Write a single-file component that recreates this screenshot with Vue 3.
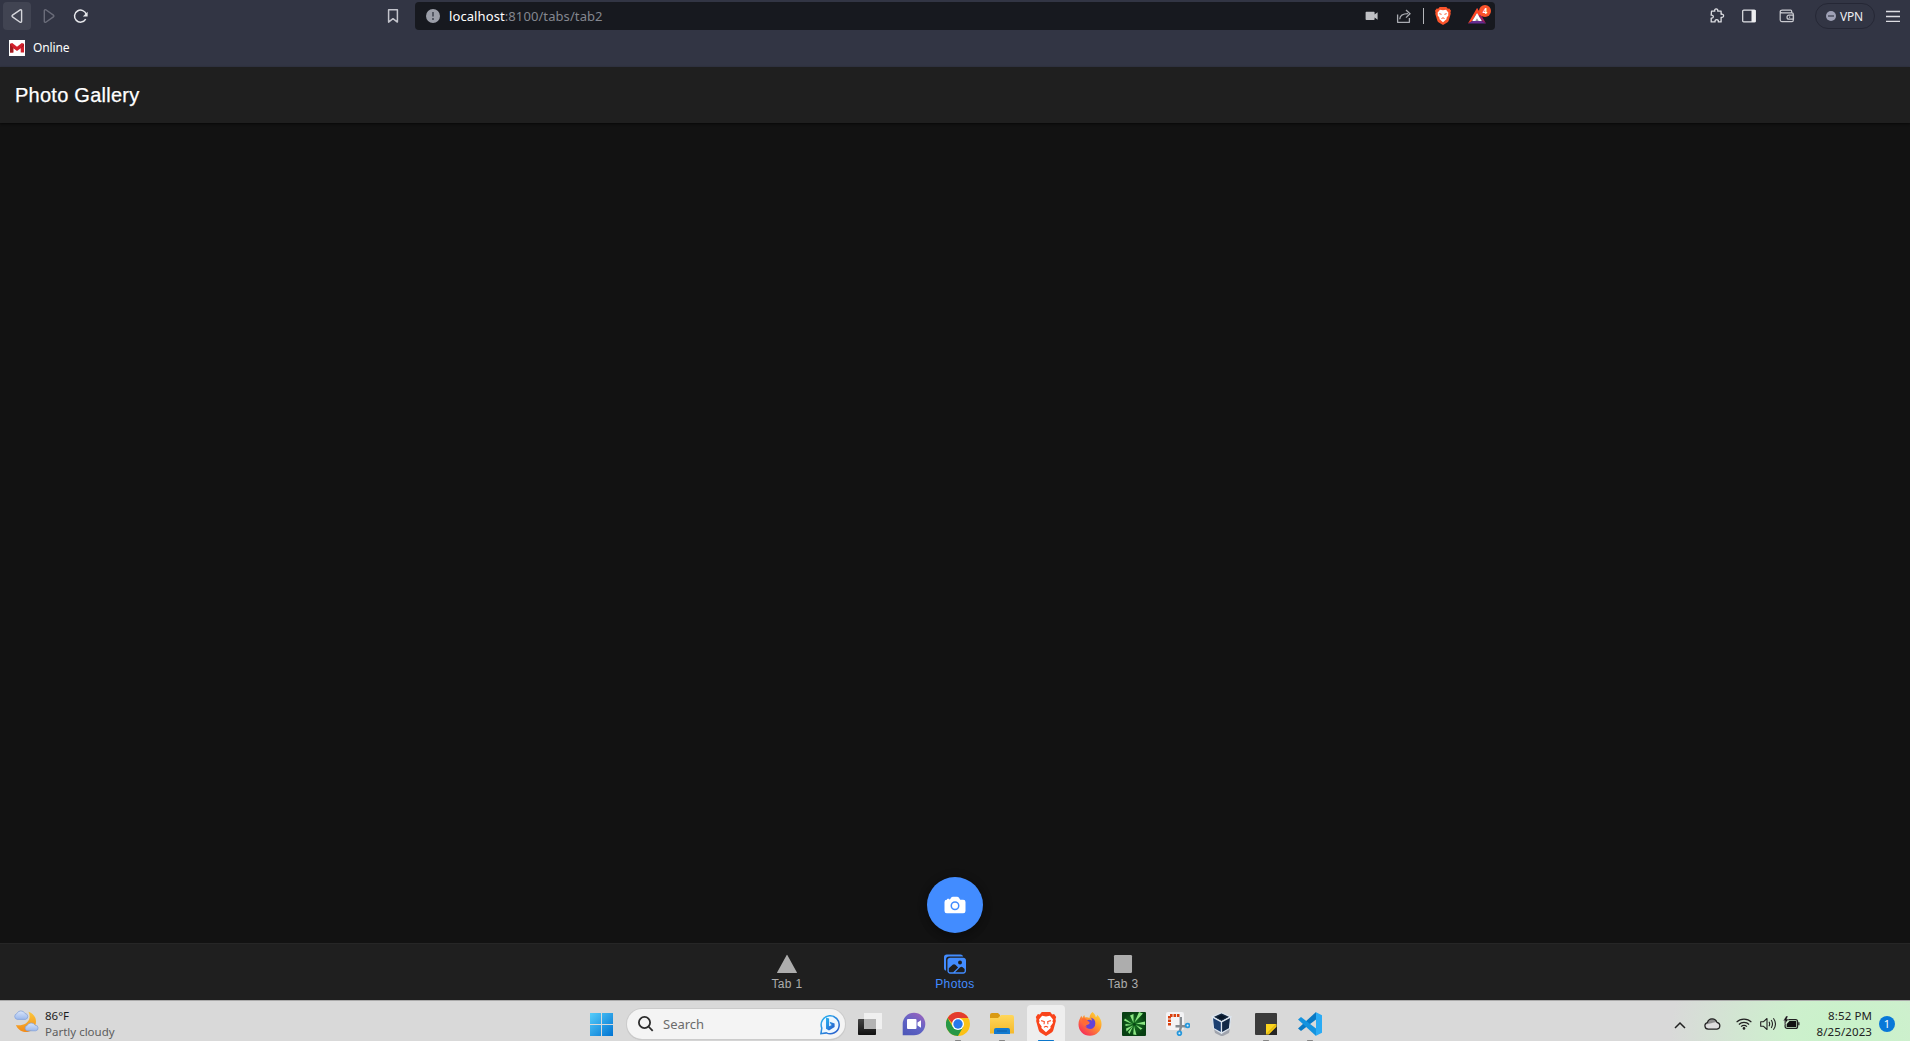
<script setup>
const tabs = [
  { id: 'triangle', label: 'Tab 1' },
  { id: 'images', label: 'Photos', active: true },
  { id: 'square', label: 'Tab 3' },
]
const apps = [
  { id: 'taskview' },
  { id: 'chat' },
  { id: 'chrome', open: true },
  { id: 'explorer', open: true },
  { id: 'brave', active: true },
  { id: 'firefox' },
  { id: 'spark' },
  { id: 'snip' },
  { id: 'vbox' },
  { id: 'sticky', open: true },
  { id: 'code', open: true },
]
</script>

<template>
  <div class="screen">
    <header class="browser">
      <div class="toolbar">
        <div class="nav">
          <button class="nav-btn back">
            <svg width="28" height="28" viewBox="0 0 28 28" fill="none" stroke="#d6d7dc" stroke-width="1.4" stroke-linejoin="round"><path d="M17.2 7.8a1 1 0 0 1 1.4.9v10.6a1 1 0 0 1-1.5.9l-7.6-5.3a1.1 1.1 0 0 1 0-1.8z" /></svg>
          </button>
          <button class="nav-btn">
            <svg width="28" height="28" viewBox="0 0 28 28" fill="none" stroke="#6a6c79" stroke-width="1.4" stroke-linejoin="round"><path d="M9.3 8.7a1 1 0 0 1 1.5-.9l7.6 5.3a1.1 1.1 0 0 1 0 1.8l-7.6 5.3a1 1 0 0 1-1.5-.9z" /></svg>
          </button>
          <button class="nav-btn">
            <svg width="28" height="28" viewBox="0 0 28 28" fill="none" stroke="#e6e7eb" stroke-width="1.5"><path d="M18.7 17.2A6 6 0 1 1 19.3 12.5" /><path d="M20.6 9.8v4.7h-4.7z" fill="#e6e7eb" stroke="none" /></svg>
          </button>
        </div>
        <svg class="bookmark" width="16" height="18" viewBox="0 0 16 18" fill="none" stroke="#c3c4cc" stroke-width="1.5" stroke-linejoin="round"><path d="M3.6 2.7h8.8v12.4L8 11.7l-4.4 3.4z" /></svg>
        <div class="address">
          <svg class="info" width="14" height="14" viewBox="0 0 14 14"><circle cx="7" cy="7" r="7" fill="#9b9ea8" /><path d="M6 3.1h2v4.4H6zM6 9h2v2H6z" fill="#555964" /></svg>
          <span class="url"><b>localhost</b>:8100/tabs/tab2</span>
          <svg class="video" width="14" height="10" viewBox="0 0 14 10" fill="#bfc0c4"><path d="M1.4.8h7.4a.8.8 0 0 1 .8.8v1.9l3-2.3v7.5l-3-2.3v1.9a.8.8 0 0 1-.8.8H1.4a.8.8 0 0 1-.8-.8V1.6a.8.8 0 0 1 .8-.8z" /></svg>
          <svg class="share" width="16" height="16" viewBox="0 0 16 16" fill="none" stroke="#a9abb1" stroke-width="1.3" stroke-linejoin="round"><path d="M1.6 6.5v7.8h11.8v-4.4" /><path d="M3.7 11.3C4 7.6 6.3 5.8 12 5.7M10 2l4 3.7-4 3.9" stroke-linejoin="miter" /></svg>
          <i class="sep"></i>
          <svg class="shield" width="16" height="18" viewBox="0 0 24 27"><path d="M7 0h10l2.3 2.7 2.2-.4L24 5.5l-.8 2.3.4 2.4-3 10.2a6 6 0 0 1-2.3 3L12 27l-6.3-3.6a6 6 0 0 1-2.3-3L.4 10.2l.4-2.4L0 5.5l2.5-3.2 2.2.4z" fill="#fb542b" /><path d="M12 5l4.6-.9 3.6 4.4-.6 2.2.7 1.4-3.2 4.3.4 1.6-5.5 4.7L6.5 18l.4-1.6-3.2-4.3.7-1.4-.6-2.2 3.6-4.4z" fill="#fff" /><path d="M6.5 10l3.3 1M17.5 10l-3.3 1M9.7 17.3L12 16.2l2.3 1.1" fill="none" stroke="#fb542b" stroke-width="1.5" /></svg>
          <span class="rewards">
            <svg width="18" height="16" viewBox="0 0 18 16"><path d="M9 0l4.5 7.5L9 8z" fill="#b73a73" /><path d="M9 0L0 15.5l4-2.3 5-8.2 1.6 2.7 2.6-.6z" fill="#ff4724" /><path d="M0 15.5h18l-4.1-2.4H4.5z" fill="#662d91" /><path d="M13.2 7.1L18 15.5l-4.1-2.4-3.3-5.3z" fill="#9e1f63" /><path d="M9 5l4.9 8.1H4.2z" fill="#fff" /><path d="M9 10.3l1.7 2.8H7.3z" fill="#999" /></svg>
            <em class="count">4</em>
          </span>
        </div>
        <div class="tools">
          <svg width="16" height="16" viewBox="0 0 16 16" fill="none" stroke="#dcdde2" stroke-width="1.3" stroke-linejoin="round"><path d="M2.500 3.200H5.800C5.300 1.600 6.300.9 7.200.9s2 .7 1.500 2.300h3.400v3.100c1.700-.5 2.500.5 2.500 1.500s-.8 1.900-2.500 1.500v4.600H9.300c.4-1.500-.4-2.200-1.600-2.200s-2 .7-1.600 2.200H2.200v-3.800c1.400.3 2.100-.5 2.100-1.500S3.600 6.900 2.200 7.200z" /></svg>
          <svg width="14" height="14" viewBox="0 0 14 14"><rect x=".7" y="1.1" width="12.6" height="11.8" rx="1" fill="none" stroke="#e2e3e7" stroke-width="1.2" /><path d="M9.5 1h4v12h-4z" fill="#eeeef0" /></svg>
          <svg width="16" height="16" viewBox="0 0 16 16" fill="none" stroke="#c9cad0" stroke-width="1.2" stroke-linejoin="round"><path d="M12.7 4.8V3.300c0-.7-.4-1.100-1-1.100H3.200c-1.300 0-2 .5-2 1.300s.7 1.300 2 1.300h9.600c1 0 1.500.5 1.500 1.300v6.200c0 .8-.5 1.300-1.300 1.300H2.800c-1 0-1.600-.6-1.600-1.500V3.500" /><path d="M14.500 7.200H10a2 2 0 0 0 0 4h4.500zM10 9.200h1.200" /></svg>
          <span class="vpn"><svg width="10" height="10" viewBox="0 0 10 10"><circle cx="5" cy="5" r="5" fill="#9fa1b6" /><path d="M2 4.3h6v1.4H2z" fill="#454858" /></svg>VPN</span>
          <svg class="menu" width="14" height="12" viewBox="0 0 14 12" stroke="#dddde2" stroke-width="1.3"><path d="M0 1.500h14M0 6.500h14M0 11.300h14" /></svg>
        </div>
      </div>
      <div class="bookmarks">
        <svg width="16" height="16" viewBox="0 0 16 16"><path d="M0 0h16v16H0z" fill="#fff" /><path d="M1 3.800l2.200-.9L8 6.700l4.800-3.800 2.200.9v8.700h-3.300V8.200L8 11 4.300 8.200v4.300H1z" fill="#d2202c" /><path d="M1 3.800l3.300 4.400v4.300H1zM11.700 8.200L15 3.800v2z" fill="#9e1b20" /></svg>
        <span>Online</span>
      </div>
    </header>

    <div class="app-header">Photo Gallery</div>
    <main class="content">
      <button class="fab">
        <svg width="24" height="24" viewBox="0 0 512 512" fill="#fff"><circle cx="256" cy="272" r="64" /><path d="M432 144h-59c-3 0-6.72-1.94-9.62-5l-25.94-40.94a15.52 15.52 0 00-1.37-1.85C327.11 85.76 315 80 302 80h-92c-13 0-25.11 5.76-34.07 16.21a15.52 15.52 0 00-1.37 1.85l-25.94 41c-2.22 2.42-5.34 5-8.62 5v-8a16 16 0 00-16-16h-24a16 16 0 00-16 16v8h-4a48.05 48.05 0 00-48 48V384a48.05 48.05 0 0048 48h352a48.05 48.05 0 0048-48V192a48.05 48.05 0 00-48-48zM256 368a96 96 0 1196-96 96.11 96.11 0 01-96 96z" /></svg>
      </button>
    </main>
    <nav class="tab-bar">
      <a v-for="t in tabs" :key="t.id" class="tab" :class="{ selected: t.active }">
        <svg width="22" height="22" viewBox="0 0 512 512" fill="currentColor">
          <path v-if="t.id === 'triangle'" d="M480 464H32a8 8 0 01-7-12L249 46a8 8 0 0114 0l224 406a8 8 0 01-7 12z" />
          <template v-else-if="t.id === 'images'">
            <path d="M450.29 112H142c-34 0-62 27.51-62 61.33v245.34c0 33.82 28 61.33 62 61.33h308c34 0 62-26.18 62-60V173.33c0-33.82-27.68-61.33-61.71-61.33zm-77.15 61.34a46 46 0 11-46.28 46 46.19 46.19 0 0146.28-46.01zm-231.55 276c-17 0-29.86-13.75-29.86-30.66v-64.83l90.46-80.79a46.54 46.54 0 0163.44 1.83L328.27 337l-113 112.33zM480 418.67a30.67 30.67 0 01-30.71 30.66H259L376.08 333a46.24 46.24 0 0159.44-.16L480 370.59z" />
            <path d="M384 32H64A64 64 0 000 96v256a64.11 64.11 0 0048 62V152a72 72 0 0172-72h326a64.11 64.11 0 00-62-48z" />
          </template>
          <rect v-else x="46" y="46" width="420" height="420" rx="28" />
        </svg>
        <span>{{ t.label }}</span>
      </a>
    </nav>

    <footer class="taskbar">
      <div class="weather">
        <svg width="26" height="24" viewBox="0 0 26 24">
          <defs>
            <linearGradient id="moon" x1="0" y1="0" x2="0" y2="1"><stop offset="0" stop-color="#fbc73b" /><stop offset="1" stop-color="#f28a19" /></linearGradient>
            <linearGradient id="cloud" x1="0" y1="0" x2="0" y2="1"><stop offset="0" stop-color="#d9e5fa" /><stop offset="1" stop-color="#9bb8ec" /></linearGradient>
          </defs>
          <path d="M15.500 1.700c5 1.500 8 6 7.400 11.200-.8 6-5.600 9.500-11 9.100-4-.4-7.500-3-8.900-7 6 1.200 12.500-1.500 13.500-7 .4-2.300 0-4.500-1-6.300z" fill="url(#moon)" />
          <path d="M4.200 9.400a3 3 0 0 1-.4-5.800A4.500 4.500 0 0 1 12 3.500a3 3 0 0 1 .5 5.900z" fill="url(#cloud)" stroke="#809fda" stroke-width=".7" />
          <path d="M14.500 20.800a2.700 2.700 0 0 1-.4-5.300 4.500 4.500 0 0 1 8-.2 2.700 2.700 0 0 1 .4 5.500z" fill="url(#cloud)" stroke="#809fda" stroke-width=".7" />
        </svg>
        <div class="weather-text"><span>86°F</span><small>Partly cloudy</small></div>
      </div>

      <div class="dock">
        <svg class="start" width="23" height="23" viewBox="0 0 23 23">
          <defs><linearGradient id="win" gradientUnits="userSpaceOnUse" x1="0" y1="0" x2="23" y2="23"><stop offset="0" stop-color="#55cdfa" /><stop offset="1" stop-color="#0073d2" /></linearGradient></defs>
          <path d="M0 0h11v11H0zM12 0h11v11H12zM0 12h11v11H0zM12 12h11v11H12z" fill="url(#win)" />
        </svg>
        <div class="search">
          <svg width="16" height="16" viewBox="0 0 16 16" fill="none" stroke="#2c2c2c" stroke-width="1.8"><circle cx="6.500" cy="6.500" r="5.600" /><path d="M10.500 10.500l4.200 4.400" /></svg>
          <span>Search</span>
          <svg width="20" height="21" viewBox="0 0 20 21">
            <defs><linearGradient id="bing" x1="0" y1="0" x2="1" y2="1"><stop offset="0" stop-color="#29b5f2" /><stop offset="1" stop-color="#2857c8" /></linearGradient></defs>
            <path d="M.9 19.700l.9-5.600A9 9 0 1 1 6.300 18.900z" fill="#eef7ff" stroke="url(#bing)" stroke-width="1.500" />
            <path d="M6 3.500l3.100 1.100v7.600l2.700-1.300-1.200-.7-1-2.500 5 1.900v3.400L9 16.400l-3-1.700z" fill="url(#bing)" />
          </svg>
        </div>
        <div class="apps">
          <div v-for="a in apps" :key="a.id" class="app" :class="{ active: a.active, open: a.open }">
            <svg width="24" height="24" viewBox="0 0 24 24">
              <template v-if="a.id === 'taskview'">
                <defs><linearGradient id="tv" x1="0" y1="0" x2="0" y2="1"><stop offset="0" stop-color="#444" /><stop offset="1" stop-color="#111" /></linearGradient></defs>
                <rect y="7" width="18" height="16" rx=".8" fill="url(#tv)" /><path d="M6 1h18v16H6z" fill="#f0f0f0" /><path d="M6 7h12v10H6z" fill="#b3b3b3" />
              </template>
              <template v-else-if="a.id === 'chat'">
                <defs><linearGradient id="ch" x1=".8" y1="0" x2=".2" y2="1"><stop offset="0" stop-color="#9a63bd" /><stop offset=".5" stop-color="#6264c6" /><stop offset="1" stop-color="#4f58b9" /></linearGradient></defs>
                <path d="M.7 23.300V12A11.300 11.300 0 1 1 12 23.300z" fill="url(#ch)" /><rect x="5" y="7" width="9.500" height="10" rx="1" fill="#fff" /><path d="M15.500 10.600L19 8.200v7.600l-3.500-2.400z" fill="#fff" />
              </template>
              <template v-else-if="a.id === 'chrome'">
                <circle cx="12" cy="12" r="12" fill="#fbc116" />
                <path d="M1.600 6a12 12 0 0 1 20.800 0H12L8 13z" fill="#e33b2e" />
                <path d="M1.600 6l5.200 9h10.400L12 24A12 12 0 0 1 1.600 6z" fill="#279847" />
                <circle cx="12" cy="12" r="6" fill="#fff" /><circle cx="12" cy="12" r="4.700" fill="#2878eb" />
              </template>
              <template v-else-if="a.id === 'explorer'">
                <defs><linearGradient id="fo" x1="0" y1="0" x2="0" y2="1"><stop offset="0" stop-color="#ffd75c" /><stop offset="1" stop-color="#f5b92b" /></linearGradient></defs>
                <path d="M0 3a2 2 0 0 1 2-2h6l2 2v6H0z" fill="#d99a13" /><path d="M0 6h8l3-3h11a2 2 0 0 1 2 2v16.500H0z" fill="url(#fo)" /><path d="M4 18a2 2 0 0 1 2-2h12a2 2 0 0 1 2 2v4H4z" fill="#127ad0" /><path d="M7 18.500h10v1H7z" fill="#0c5ca6" />
              </template>
              <template v-else-if="a.id === 'brave'">
                <g transform="translate(1.800 0) scale(.85 .89)"><path d="M7 0h10l2.300 2.700 2.200-.4L24 5.500l-.8 2.300.4 2.400-3 10.200a6 6 0 0 1-2.300 3L12 27l-6.300-3.600a6 6 0 0 1-2.300-3L.4 10.200l.4-2.400L0 5.500l2.500-3.200 2.200.4z" fill="#f9441b" /><path d="M12 5l4.600-.9 3.600 4.400-.6 2.200.7 1.400-3.200 4.300.4 1.600-5.500 4.700L6.500 18l.4-1.600-3.200-4.300.7-1.400-.6-2.200 3.600-4.400z" fill="#fff" /><path d="M6.300 9.700l3.700 1-.3 3M17.700 9.700l-3.700 1 .3 3M9.500 17.200L12 16.100l2.500 1.100" fill="none" stroke="#f9441b" stroke-width="1.200" /></g>
              </template>
              <template v-else-if="a.id === 'firefox'">
                <defs><linearGradient id="ff" x1="1" y1="0" x2=".2" y2="1"><stop offset="0" stop-color="#ffe53c" /><stop offset=".45" stop-color="#ff9a2b" /><stop offset="1" stop-color="#f6265c" /></linearGradient></defs>
                <path d="M14.500 0c2 1.600 3 3.300 3.300 5.200 1-.4 1.300-1.500 1.200-2.500 3 2.500 4.700 6 4.500 10A11.500 11.500 0 0 1 12 23.800C5.500 23.800.5 18.800.5 12.500c0-4 1.500-6.500 3-8.800l.7 2.300 2-3 .8 2.600c1.600-.5 3-.3 4.500.4C11.700 3.700 12.500 1.700 14.500 0z" fill="url(#ff)" />
                <path d="M8 9.200c2-2 4.500-2 6-.5-.2-1.800-.8-2.700-1.500-3.200 3.600.8 5 3.300 4.800 6.200A5.400 5.400 0 0 1 12 17c-3 0-5-2-5.300-4.400 2 .8 3.600.4 5-1.300-1.500-.2-2.800-.8-3.700-2.100z" fill="#6543d6" />
                <path d="M4 7c1.500-1.300 3.500-1.200 4.800 1 .8 1.300 2 1.600 3 1.900-.4 1.200-1.700 1.500-2.700 2.100-1 .6-1 1.900-.4 3C5.500 14 3.800 10.600 4 7z" fill="#ff6a36" />
              </template>
              <template v-else-if="a.id === 'spark'">
                <defs><radialGradient id="gr"><stop offset="0" stop-color="#1a7a24" /><stop offset="1" stop-color="#073f12" /></radialGradient></defs>
                <rect width="24" height="24" rx="1" fill="url(#gr)" /><path d="M11.500 11L8 3.500 11.500 2zM12.500 10.500L17 0l4 1.500zM14 11.500l9-2v3.500zM14 13l6.500 3.500-2 1.300zM12 14l2.500 9-3.300-.5zM11 13.500l-6.500 6-.5-3zM10.500 12L2 8.500l1-2zM11 14l-3.500 8-1.500-2zM10 12.700L3.500 14v-2z" fill="#8be682" /><circle cx="12.300" cy="12.200" r="1.500" fill="#0a4a16" />
              </template>
              <template v-else-if="a.id === 'snip'">
                <rect width="18" height="18" rx="2" fill="#f3f3f5" /><path d="M3.500 13.500V3.500h10" fill="none" stroke="#d9400e" stroke-width="3" stroke-dasharray="2.600 .9" /><path d="M14.800 5v10.500l-1 3.500M9.500 14.300H20" fill="none" stroke="#858b91" stroke-width="2.400" /><circle cx="13.400" cy="21.300" r="1.900" fill="#d9edf8" stroke="#2798dc" stroke-width="1.800" /><circle cx="21.600" cy="13.500" r="1.900" fill="#d9edf8" stroke="#2798dc" stroke-width="1.800" />
              </template>
              <template v-else-if="a.id === 'vbox'">
                <path d="M4 17l8 3 8-4-1 5-6 3h-2l-6-3z" fill="#a0a4ad" /><path d="M11.500.7l9.200 4.200-9.200 5-9.200-5z" fill="#14283f" stroke="#dce5ef" stroke-width="1.200" /><path d="M2.300 4.900l9.200 5v11.200l-8-4.700z" fill="#1c3f70" stroke="#dce5ef" stroke-width="1.200" /><path d="M20.700 4.900l-9.200 5v11.200l8-4.700z" fill="#132947" stroke="#dce5ef" stroke-width="1.200" /><path d="M11.500 2.900l4.500 2.200-4.500 2.500L7 5.100z" fill="#061528" />
              </template>
              <template v-else-if="a.id === 'sticky'">
                <rect x="1" y="1" width="22" height="22" rx="1" fill="#3b3b3b" /><path d="M12 12h10.500L12 22.500z" fill="#fdd51d" /><path d="M22.500 12v3L15 22.500h-3z" fill="#f5c70f" /><path d="M23 14.500V23h-8.500z" fill="#262626" />
              </template>
              <template v-else>
                <path d="M18 0v7.500L3 19 0 16.500z" fill="#0879c5" /><path d="M0 7.500L3 5l15 11.500V24z" fill="#1493df" /><path d="M18 .3l6 2.900v17.600l-6 2.900z" fill="#2aabf5" />
              </template>
            </svg>
          </div>
        </div>
      </div>

      <div class="tray">
        <svg class="chev" width="12" height="8" viewBox="0 0 12 8" fill="none" stroke="#222" stroke-width="1.5"><path d="M1 7l5-5 5 5" /></svg>
        <svg class="od" width="17" height="12" viewBox="0 0 17 12">
          <defs><linearGradient id="od" x1="0" y1="0" x2=".35" y2="1"><stop offset=".45" stop-color="#8f8f8f" /><stop offset=".55" stop-color="#dedede" /></linearGradient></defs>
          <path d="M4.200 11.200a3.400 3.400 0 0 1-.7-6.700C4.600.2 11-.6 12.900 4.300a3.500 3.500 0 0 1 .1 6.900z" fill="url(#od)" stroke="#222" stroke-width="1.200" />
        </svg>
        <svg class="wifi" width="16" height="12" viewBox="0 0 16 12" fill="none" stroke="#222" stroke-width="1.2"><path d="M.6 4.200a10.400 10.400 0 0 1 14.800 0M2.900 6.500a7.200 7.200 0 0 1 10.200 0M5.100 8.600a4.100 4.100 0 0 1 5.800 0" /><circle cx="8" cy="10.400" r="1.300" fill="#222" stroke="none" /></svg>
        <svg class="vol" width="17" height="14" viewBox="0 0 17 14" fill="none" stroke="#222" stroke-width="1.1" stroke-linejoin="round"><path d="M.7 4.800h2.600L7 1.500v11L3.300 9.200H.7zM9 4.800q1.300 2.200 0 4.400M11.200 3q2.600 4 0 8M13.400 1.200q4.200 5.800 0 11.600" /></svg>
        <svg class="bat" width="17" height="14" viewBox="0 0 17 14"><rect x="2.100" y="3.600" width="12.500" height="8.800" rx="2" fill="none" stroke="#222" stroke-width="1.200" /><path d="M3.700 8L6.500 5h6.800v6H3.700z" fill="#111" /><path d="M15.200 6.300h1.300v3h-1.300z" fill="#222" /><path d="M3.200 0L.3 4.700h2L1.500 8.500 5.500 3.300H3.700L5 0z" fill="#111" stroke="#daddd9" stroke-width=".4" /></svg>
        <div class="clock"><span>8:52 PM</span><span>8/25/2023</span></div>
        <b class="notif">1</b>
      </div>
    </footer>
  </div>
</template>

<style>
body { margin: 0; overflow: hidden; }
</style>

<style scoped>
.screen { width: 1910px; height: 1041px; display: flex; flex-direction: column; background: #121212; font-family: "Noto Sans", sans-serif; overflow: hidden; }
svg { display: block; flex: none; }
button { border: 0; padding: 0; background: none; }
.browser { height: 67px; background: #323544; flex: none; }
.toolbar { height: 32px; display: flex; align-items: center; }
.nav { display: flex; gap: 4px; padding-left: 3px; width: 382px; box-sizing: border-box; }
.nav-btn { width: 28px; height: 28px; border-radius: 4px; }
.nav-btn.back { background: #414452; }
.bookmark { margin: 0 14px 0 3px; }
.address { width: 1080px; height: 28px; border-radius: 4px; background: #17191f; display: flex; align-items: center; box-sizing: border-box; padding-left: 11px; }
.url { margin-left: 9px; font-size: 13px; color: #84878f; width: 916px; letter-spacing: .09px; white-space: nowrap; }
.url b { font-weight: 400; color: #fff; }
.share { margin-left: 17px; }
.sep { width: 1px; height: 16px; background: #b5b6ba; margin-left: 11px; }
.shield { margin-left: 11px; }
.rewards { position: relative; margin-left: 17px; }
.count { position: absolute; left: 11px; top: -3px; width: 12px; height: 12px; border-radius: 50%; background: #fb542b; color: #fff; font: 700 8px/12px "Noto Sans", sans-serif; text-align: center; }
.tools { margin-left: auto; display: flex; align-items: center; gap: 22px; padding-right: 10px; }
.tools > svg:nth-child(2) { margin-left: -5px; }
.tools > svg:nth-child(3) { margin-left: 1px; }
.vpn { width: 60px; height: 26px; box-sizing: border-box; border: 1px solid #252735; border-radius: 13px; display: flex; align-items: center; padding-left: 10px; gap: 4px; font-size: 12px; letter-spacing: -.2px; color: #eeeef2; margin-left: -2px; }
.menu { margin-left: -11px; }
.bookmarks { height: 31px; display: flex; align-items: center; padding-left: 9px; gap: 8px; color: #fff; font-size: 12px; letter-spacing: -.15px; }
.app-header { height: 56px; flex: none; background: #1f1f1f; box-sizing: border-box; padding-left: 15px; font: 20px/56px "Liberation Sans", sans-serif; letter-spacing: .25px; -webkit-text-stroke: .25px #fff; color: #fff; box-shadow: 0 1px 2px #080808; position: relative; }
.content { flex: 1; display: flex; align-items: flex-end; justify-content: center; padding-bottom: 10px; }
.fab { width: 56px; height: 56px; border-radius: 50%; background: #428cff; display: flex; align-items: center; justify-content: center; box-shadow: 0 3px 5px -1px rgba(0,0,0,.2), 0 5px 9px rgba(0,0,0,.14), 0 1px 12px rgba(0,0,0,.12); }
.tab-bar { height: 57px; flex: none; box-sizing: border-box; border-top: 1px solid #262626; background: #1f1f1f; display: flex; justify-content: center; }
.tab { width: 168px; display: flex; flex-direction: column; align-items: center; padding-top: 9px; color: #adadad; font: 12px/14px "Liberation Sans", sans-serif; letter-spacing: .35px; }
.tab span { margin-top: 2px; }
.tab.selected { color: #428cff; }
.taskbar { height: 41px; flex: none; box-sizing: border-box; border-top: 1px solid #aaa; background: radial-gradient(ellipse 180px 120px at 1850px 30px, #c8f2c9 0, #cdf0cd 35%, rgba(217,217,217,0) 100%), #d9d9d9; display: flex; align-items: flex-start; }
.weather { width: 590px; padding: 9px 0 0 13px; box-sizing: border-box; display: flex; gap: 6px; }
.weather-text { display: flex; flex-direction: column; font-size: 11.5px; line-height: 16px; color: #1c1c1c; margin-top: -2px; }
.weather-text small { font-size: 11.5px; color: #5d5d5d; }
.dock { display: flex; align-items: flex-start; }
.start { margin: 12px 14px 0 0; }
.search { width: 218px; height: 30px; margin-top: 8px; box-sizing: border-box; border-radius: 15px; background: #f4f4f4; box-shadow: 0 0 0 1px #cbcbcb, 0 1px 1px #aaa; display: flex; align-items: center; padding: 0 5px 0 11px; }
.search span { flex: 1; margin-left: 9px; font-size: 13px; color: #6b6b6b; }
.apps { display: flex; margin-left: 3px; }
.app { width: 44px; height: 40px; display: flex; justify-content: center; padding-top: 11px; box-sizing: border-box; position: relative; }
.app.active::before { content: ""; position: absolute; left: 3px; right: 3px; top: 4px; bottom: 0; background: #eee; border-radius: 4px 4px 0 0; }
.app.active svg { position: relative; }
.app.open::after, .app.active::after { content: ""; position: absolute; bottom: 0; left: 19px; width: 6px; height: 1px; background: #858585; border-radius: 1px; }
.app.active::after { left: 14px; width: 16px; background: #0b76cb; }
.tray { margin-left: auto; height: 40px; width: 236px; display: flex; align-items: flex-start; }
.chev { margin-top: 20px; }
.od { margin: 17px 0 0 18px; }
.wifi { margin: 17px 0 0 15px; }
.vol { margin: 16px 0 0 8px; }
.bat { margin: 15px 0 0 6px; }
.clock { flex: 1; display: flex; flex-direction: column; align-items: flex-end; font-size: 11.5px; line-height: 16px; letter-spacing: .1px; color: #222; padding-top: 7px; }
.notif { width: 16px; height: 16px; border-radius: 50%; background: #0878d8; color: #fff; font: 11px/16px "Noto Sans", sans-serif; text-align: center; margin: 15px 15px 0 7px; }
</style>
